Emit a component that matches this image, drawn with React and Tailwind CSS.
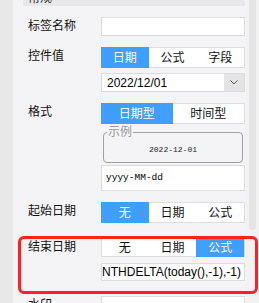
import React from 'react';

const Seg = ({ items, active, h = 'h-[21px]' }) => (
    <div className={`flex ${h} bg-white border border-[#dddddd]`}>
        {items.map((t, i) => (
            <div
                key={t}
                className={`flex-1 flex items-center justify-center text-[12px] ${i === active ? 'bg-[#409eff] text-white -my-px' : 'text-[#111]'} ${i === 0 ? '-ml-px' : ''}`}
            >
                {t}
            </div>
        ))}
    </div>
);

const Row = ({ label, mt, children }) => (
    <div className={`flex ${mt}`}>
        <div className="w-[73px] shrink-0 text-[12px] leading-[19px] text-[#111]">{label}</div>
        <div className="w-[144px] shrink-0">{children}</div>
    </div>
);

const App = () => {
    return (
        <div className="relative w-[259px] h-[303px] overflow-hidden flex bg-[#e8e8e8] font-['Liberation_Sans','Noto_Sans_CJK_SC',sans-serif]">
            <div className="w-[13px] shrink-0 bg-[#e8e8e8]" />

            {/* Properties panel */}
            <div className="w-[233px] shrink-0 bg-[#f4f4f6] flex flex-col">
                <div className="ml-[10px] mr-[1px] h-[20px] -mt-[14px] pt-[3px] px-[5px] bg-[#e8e8ea] flex items-center justify-between text-[12px] text-[#333]">
                    <span>常规</span>
                    <span className="text-[#aaa] text-[10px] mr-[4px]">⌃</span>
                </div>

                <div className="pl-[15px] pr-[1px]">
                    <Row label="标签名称" mt="mt-[11px]">
                        <div className="h-[19px] bg-white border border-[#dcdcdc]" />
                    </Row>

                    <Row label="控件值" mt="mt-[11px]">
                        <Seg items={['日期', '公式', '字段']} active={0} />
                        <div className="mt-[5px] h-[19px] bg-white border border-[#dcdcdc] flex items-center">
                            <span className="flex-1 pl-[5px] text-[12px] text-black">2022/12/01</span>
                            <div className="w-[20px] h-full bg-[#e4e4e4] flex items-center justify-center">
                                <svg width="8" height="5" viewBox="0 0 8 5">
                                    <polyline points="0.5,0.5 4,4 7.5,0.5" fill="none" stroke="#555" strokeWidth="1" />
                                </svg>
                            </div>
                        </div>
                    </Row>

                    <Row label="格式" mt="mt-[11px]">
                        <Seg items={['日期型', '时间型']} active={0} />
                        <fieldset className="mt-[2px] mx-[2px] border border-[#a0a0a0] rounded-[4px] px-[2px]">
                            <legend className="ml-[1px] px-[1px] text-[12px] leading-[12px] text-[#9a9a9a]">示例</legend>
                            <div className="h-[24px] flex items-center justify-center font-['Liberation_Mono',monospace] text-[8px] text-[#222]">
                                2022-12-01
                            </div>
                        </fieldset>
                        <div className="mt-[2px] h-[26px] bg-white border border-[#dcdcdc] flex items-center pl-[4px] font-['Liberation_Mono',monospace] text-[9.5px] text-black">
                            yyyy-MM-dd
                        </div>
                    </Row>

                    <Row label="起始日期" mt="mt-[11px]">
                        <Seg items={['无', '日期', '公式']} active={0} />
                    </Row>

                    <Row label="结束日期" mt="mt-[15px]">
                        <Seg items={['无', '日期', '公式']} active={2} h="h-[19px]" />
                        <div className="mt-[6px] h-[18px] bg-white border border-[#dcdcdc] flex items-center justify-end overflow-hidden pr-[3px]">
                            <span className="whitespace-nowrap text-[12px] text-black">DATEDELTA(MONTHDELTA(today(),-1),-1)</span>
                        </div>
                    </Row>

                    <Row label="水印" mt="mt-[15px]">
                        <div className="h-[19px] bg-white border border-[#dcdcdc]" />
                    </Row>
                </div>
            </div>

            {/* Scrollbar */}
            <div className="w-[13px] shrink-0 bg-[#f2f2f2]">
                <div className="mx-[3px] h-[230px] rounded-b-[4px] bg-[#e4e4e4]" />
            </div>

            {/* Red highlight annotation */}
            <div className="absolute left-[18px] top-[236px] w-[240px] h-[58px] border-[3px] border-[#ff2020] rounded-[6px]" />
        </div>
    );
};

export default App;
